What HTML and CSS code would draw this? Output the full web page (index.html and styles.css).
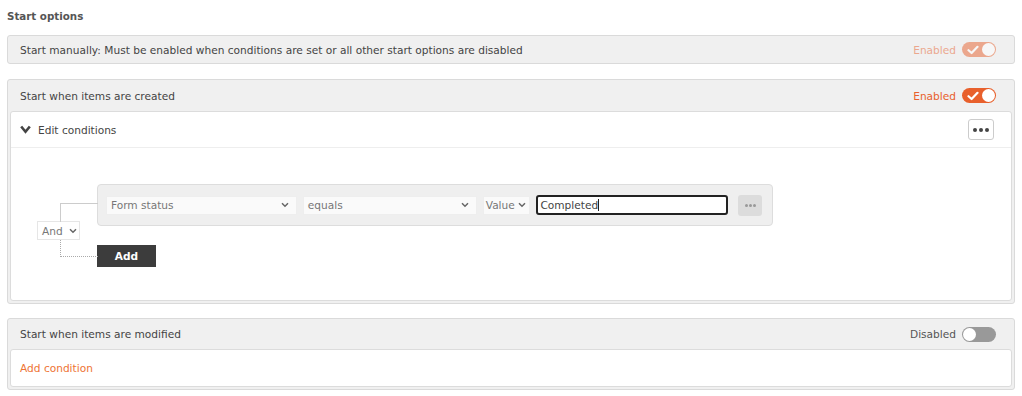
FILE: index.html
```html
<!DOCTYPE html>
<html>
<head>
<link rel="stylesheet" href="styles.css">
<meta charset="UTF-8">
<title>Start options</title>
</head>
<body>
<div class="page">
<div class="title">Start options</div>

<div class="panel">
	<div class="panel_head">
		<span>Start manually: Must be enabled when conditions are set or all other start options are disabled</span>
		<div class="state faded">
			<span class="state_lbl on">Enabled</span>
			<span class="switch on"><svg class="tick" width="12" height="10" viewBox="0 0 12 10"><path d="M1.5 5.2 L4.6 8 L10.5 1.8" fill="none" stroke="#fff" stroke-width="2.2" stroke-linecap="round" stroke-linejoin="round"/></svg><i class="knob"></i></span>
		</div>
	</div>
</div>

<div class="panel open">
	<div class="panel_head tall">
		<span>Start when items are created</span>
		<div class="state">
			<span class="state_lbl on">Enabled</span>
			<span class="switch on"><svg class="tick" width="12" height="10" viewBox="0 0 12 10"><path d="M1.5 5.2 L4.6 8 L10.5 1.8" fill="none" stroke="#fff" stroke-width="2.2" stroke-linecap="round" stroke-linejoin="round"/></svg><i class="knob"></i></span>
		</div>
	</div>
	<div class="panel_body">
		<div class="cond_head">
			<svg class="chev" width="11" height="9" viewBox="0 0 11 9"><path d="M1.2 1.5 L5.5 6.8 L9.8 1.5" fill="none" stroke="#444" stroke-width="2.6"/></svg>
			<span>Edit conditions</span>
			<button class="more_btn"><i></i><i></i><i></i></button>
		</div>
		<div class="cond_body">
			<div class="tree">
				<div class="op_col">
					<div class="op_sel">And <svg width="8" height="6" viewBox="0 0 8 6"><path d="M1 1.3 L4 4.3 L7 1.3" fill="none" stroke="#666" stroke-width="1.5"/></svg></div>
				</div>
				<div class="rule_col">
					<div class="rule">
						<div class="sel w_field">Form status <svg width="8" height="6" viewBox="0 0 8 6"><path d="M1 1.3 L4 4.3 L7 1.3" fill="none" stroke="#666" stroke-width="1.5"/></svg></div>
						<div class="sel w_op">equals <svg width="8" height="6" viewBox="0 0 8 6"><path d="M1 1.3 L4 4.3 L7 1.3" fill="none" stroke="#666" stroke-width="1.5"/></svg></div>
						<div class="sel w_val">Value <svg width="8" height="6" viewBox="0 0 8 6"><path d="M1 1.3 L4 4.3 L7 1.3" fill="none" stroke="#666" stroke-width="1.5"/></svg></div>
						<div class="txt">Completed<span class="caret"></span></div>
						<button class="rule_more"><i></i><i></i><i></i></button>
					</div>
					<button class="add_btn">Add</button>
				</div>
			</div>
		</div>
	</div>
</div>

<div class="panel">
	<div class="panel_head tall">
		<span>Start when items are modified</span>
		<div class="state">
			<span class="state_lbl">Disabled</span>
			<span class="switch off"><i class="knob"></i></span>
		</div>
	</div>
	<div class="panel_body">
		<div class="add_cond">Add condition</div>
	</div>
</div>
</div>
</body>
</html>
```

FILE: styles.css
```css
body {
	margin: 0;
	font-family: "DejaVu Sans", Verdana, sans-serif;
	font-size: 10.6px;
	color: #444;
	background: #fff;
}
.page {
	padding: 9px 7px 0 7px;
}
.title {
	font-weight: bold;
	font-size: 10.3px;
	color: #555;
	height: 14px;
	line-height: 14px;
	margin-bottom: 12px;
}
.panel {
	border: 1px solid #dadada;
	border-radius: 3px;
	background: #f0f0f0;
	margin-bottom: 15px;
}
.panel.open {
	margin-bottom: 14px;
}
.panel_head {
	display: flex;
	align-items: center;
	justify-content: space-between;
	height: 27px;
	padding: 0 18px 0 12px;
}
.panel_head.tall {
	height: 30px;
}
.panel.open .panel_head {
	height: 31px;
}
.state {
	display: flex;
	align-items: center;
	gap: 6px;
}
.state.faded {
	opacity: 0.5;
}
.state_lbl {
	color: #555;
}
.state_lbl.on {
	color: #e8602c;
}
.switch {
	position: relative;
	display: block;
	width: 34px;
	height: 15px;
	border-radius: 8px;
	background: #999;
}
.switch.on {
	background: #e8602c;
}
.switch .knob {
	position: absolute;
	top: 1px;
	width: 13px;
	height: 13px;
	border-radius: 50%;
	background: #fff;
}
.switch.on .knob {
	right: 1px;
}
.switch.off .knob {
	left: 1px;
}
.switch .tick {
	position: absolute;
	left: 5px;
	top: 3px;
}
.panel_body {
	margin: 0 2px 2px 2px;
	background: #fff;
	border: 1px solid #dcdcdc;
	border-radius: 3px;
}
.cond_head {
	display: flex;
	align-items: center;
	height: 35px;
	padding: 0 17px 0 9px;
	border-bottom: 1px solid #eee;
	color: #444;
}
.chev {
	margin-right: 7px;
}
.more_btn {
	margin-left: auto;
	width: 26px;
	height: 21px;
	border: 1px solid #ccc;
	border-radius: 3px;
	background: #fff;
	display: flex;
	align-items: center;
	justify-content: center;
	gap: 2px;
	padding: 0;
}
.more_btn i, .rule_more i {
	display: block;
	width: 4px;
	height: 4px;
	border-radius: 50%;
	background: #444;
}
.cond_body {
	padding: 36px 0 33px 26px;
}
.tree {
	display: flex;
}
.op_col {
	width: 43px;
	margin-right: 17px;
	padding-top: 37px;
}
.op_sel {
	position: relative;
	box-sizing: border-box;
	height: 19px;
	border: 1px solid #e6e6e6;
	background: #fff;
	color: #777;
	display: flex;
	align-items: center;
	gap: 6px;
	padding-left: 4px;
}
.op_sel::before {
	content: "";
	position: absolute;
	left: 22px;
	top: -19px;
	width: 37px;
	height: 18px;
	border-left: 1px solid #ccc;
	border-top: 1px solid #ccc;
}
.op_sel::after {
	content: "";
	position: absolute;
	left: 22px;
	top: 18px;
	width: 37px;
	height: 16px;
	border-left: 1px dotted #aaa;
	border-bottom: 1px dotted #aaa;
}
.rule {
	display: flex;
	align-items: center;
	width: 676px;
	box-sizing: border-box;
	height: 42px;
	padding: 0 10px 0 8px;
	background: #efefef;
	border: 1px solid #ddd;
	border-radius: 4px;
}
.sel {
	box-sizing: border-box;
	height: 19px;
	border: 1px solid #eee;
	background: #fafafa;
	color: #777;
	display: flex;
	align-items: center;
	justify-content: space-between;
	padding: 0 7px 0 4px;
	margin-right: 6px;
}
.w_field { width: 192px; }
.w_op { width: 175px; }
.w_val {
	width: 48px;
	padding: 0 2px 0 2px;
	justify-content: flex-start;
	gap: 3px;
	margin-right: 6px;
}
.txt {
	box-sizing: border-box;
	width: 193px;
	height: 20px;
	border: 2px solid #222;
	border-radius: 3px;
	background: #fff;
	color: #444;
	padding-left: 2px;
	line-height: 16px;
	margin-right: 10px;
}
.caret {
	display: inline-block;
	width: 1px;
	height: 12px;
	background: #222;
	vertical-align: -2px;
}
.rule_more {
	width: 24px;
	height: 21px;
	border: 0;
	border-radius: 3px;
	background: #dcdcdc;
	display: flex;
	align-items: center;
	justify-content: center;
	gap: 1px;
	padding: 0;
}
.rule_more i {
	width: 3px;
	height: 3px;
	background: #999;
}
.add_btn {
	margin-top: 19px;
	width: 59px;
	height: 22px;
	border: 0;
	background: #3c3c3c;
	color: #fff;
	font-family: "DejaVu Sans", Verdana, sans-serif;
	font-size: 10.6px;
	font-weight: bold;
	padding: 0;
	display: block;
}
.add_cond {
	height: 36px;
	line-height: 36px;
	padding-left: 9px;
	color: #ee7434;
}
```
